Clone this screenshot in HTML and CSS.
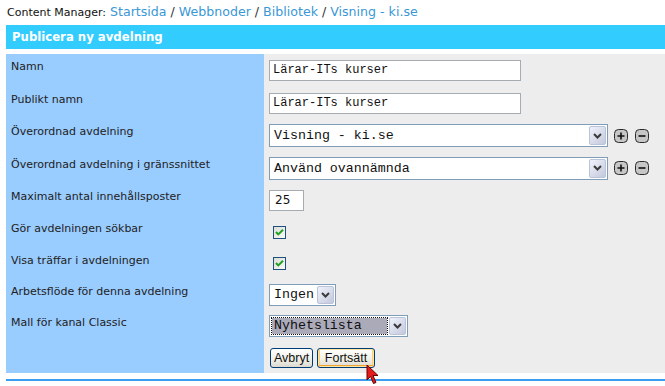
FILE: index.html
```html
<!DOCTYPE html>
<html lang="sv">
<head>
<meta charset="utf-8">
<title>Publicera ny avdelning</title>
<link rel="stylesheet" href="styles.css">
</head>
<body>
<div class="crumbs"><span class="cm">Content Manager:</span> <a class="lnk">Startsida</a> / <a class="lnk">Webbnoder</a> / <a class="lnk">Bibliotek</a> / <a class="lnk">Visning - ki.se</a></div>
<div class="title">Publicera ny avdelning</div>
<div class="form">
  <div class="lbl">Namn</div>
  <div class="val"><div class="text w-long">Lärar-ITs kurser</div></div>

  <div class="lbl">Publikt namn</div>
  <div class="val"><div class="text w-long">Lärar-ITs kurser</div></div>

  <div class="lbl">Överordnad avdelning</div>
  <div class="val">
    <div class="select w-wide"><span class="opt">Visning - ki.se</span><span class="arrow"><svg width="9" height="6" viewBox="0 0 9 6"><path d="M1 1 L4.5 4.5 L8 1" fill="none" stroke="#3a3a3a" stroke-width="2"/></svg></span></div>
    <div class="pm">
      <svg width="14" height="14" viewBox="0 0 14 14"><rect x="0.5" y="0.5" width="13" height="13" rx="4" fill="#c6c6c6" stroke="#2a2a2a"/><path d="M3.5 7 H10.5 M7 3.5 V10.5" stroke="#111" stroke-width="1.6"/></svg>
      <svg width="14" height="14" viewBox="0 0 14 14"><rect x="0.5" y="0.5" width="13" height="13" rx="4" fill="#c6c6c6" stroke="#2a2a2a"/><path d="M3.5 7 H10.5" stroke="#111" stroke-width="1.6"/></svg>
    </div>
  </div>

  <div class="lbl">Överordnad avdelning i gränssnittet</div>
  <div class="val">
    <div class="select w-wide"><span class="opt">Använd ovannämnda</span><span class="arrow"><svg width="9" height="6" viewBox="0 0 9 6"><path d="M1 1 L4.5 4.5 L8 1" fill="none" stroke="#3a3a3a" stroke-width="2"/></svg></span></div>
    <div class="pm">
      <svg width="14" height="14" viewBox="0 0 14 14"><rect x="0.5" y="0.5" width="13" height="13" rx="4" fill="#c6c6c6" stroke="#2a2a2a"/><path d="M3.5 7 H10.5 M7 3.5 V10.5" stroke="#111" stroke-width="1.6"/></svg>
      <svg width="14" height="14" viewBox="0 0 14 14"><rect x="0.5" y="0.5" width="13" height="13" rx="4" fill="#c6c6c6" stroke="#2a2a2a"/><path d="M3.5 7 H10.5" stroke="#111" stroke-width="1.6"/></svg>
    </div>
  </div>

  <div class="lbl">Maximalt antal innehållsposter</div>
  <div class="val"><div class="text num">25</div></div>

  <div class="lbl">Gör avdelningen sökbar</div>
  <div class="val"><svg class="cb" width="13" height="13" viewBox="0 0 13 13"><defs><linearGradient id="cbg" x1="0" y1="0" x2="1" y2="1"><stop offset="0" stop-color="#dcdcd6"/><stop offset="1" stop-color="#fbfbf9"/></linearGradient></defs><rect x="0.5" y="0.5" width="12" height="12" fill="url(#cbg)" stroke="#1c5180"/><path d="M3 6 L5.3 8.4 L10 3.8" fill="none" stroke="#21a121" stroke-width="2"/></svg></div>

  <div class="lbl">Visa träffar i avdelningen</div>
  <div class="val"><svg class="cb" width="13" height="13" viewBox="0 0 13 13"><rect x="0.5" y="0.5" width="12" height="12" fill="url(#cbg)" stroke="#1c5180"/><path d="M3 6 L5.3 8.4 L10 3.8" fill="none" stroke="#21a121" stroke-width="2"/></svg></div>

  <div class="lbl">Arbetsflöde för denna avdelning</div>
  <div class="val"><div class="select w-ingen"><span class="opt">Ingen</span><span class="arrow"><svg width="9" height="6" viewBox="0 0 9 6"><path d="M1 1 L4.5 4.5 L8 1" fill="none" stroke="#3a3a3a" stroke-width="2"/></svg></span></div></div>

  <div class="lbl">Mall för kanal Classic</div>
  <div class="val"><div class="select w-mall"><span class="opt focus">Nyhetslista</span><span class="arrow"><svg width="9" height="6" viewBox="0 0 9 6"><path d="M1 1 L4.5 4.5 L8 1" fill="none" stroke="#3a3a3a" stroke-width="2"/></svg></span></div></div>

  <div class="lbl"></div>
  <div class="val btns"><span class="btn">Avbryt</span><span class="btn hot">Fortsätt</span></div>
</div>
<div class="rule"></div>
<svg class="cursor" width="14" height="22" viewBox="0 0 14 22"><path d="M1 1 L1 16 L4.5 12.5 L7.5 19.5 L10 18.5 L7 11.5 L12 11.5 Z" fill="#e41b1b" stroke="#6a0000" stroke-width="1" stroke-linejoin="round"/></svg>
</body>
</html>
```

FILE: styles.css
```css
html, body {
  margin: 0;
  padding: 0;
  background: #ffffff;
}
body {
  padding-left: 6px;
  font-family: "DejaVu Sans", Verdana, sans-serif;
  color: #222;
  position: relative;
  overflow: hidden;
  height: 386px;
}
.crumbs {
  height: 25px;
  box-sizing: border-box;
  padding: 4px 0 0 1px;
  font-family: "DejaVu Sans", sans-serif;
  font-size: 12.6px;
  line-height: 16px;
  color: #333;
  white-space: nowrap;
}
.cm {
  font-family: "DejaVu Sans", sans-serif;
  font-size: 11px;
  color: #111;
}
.lnk {
  color: #3a98d6;
  text-decoration: none;
}
.title {
  height: 24px;
  line-height: 24px;
  background: #33ccff;
  color: #fff;
  font-weight: bold;
  font-size: 11.7px;
  padding-left: 6px;
  white-space: nowrap;
}
.form {
  margin-top: 5px;
  display: grid;
  grid-template-columns: 258px 1fr;
  grid-template-rows: 33px 32px 33px 32px 32px 32px 31px 31px 32px 31px;
  background: #ededed;
}
.lbl {
  background: #99ccff;
  font-size: 11px;
  line-height: 13px;
  padding: 6px 0 0 5px;
  color: #222;
  white-space: nowrap;
}
.val {
  display: flex;
  align-items: center;
  padding-left: 5px;
}
.text {
  box-sizing: border-box;
  height: 21px;
  border: 1px solid #a5acb2;
  background: #fff;
  font-family: "Liberation Mono", "Courier New", monospace;
  font-size: 12px;
  line-height: 19px;
  padding-left: 3px;
  color: #111;
}
.w-long { width: 252px; }
.num {
  width: 35px;
  font-family: "DejaVu Sans", sans-serif;
  font-size: 12px;
  padding-left: 5px;
}
.select {
  box-sizing: border-box;
  height: 22px;
  border: 1px solid #7f9db9;
  background: #fff;
  display: flex;
  align-items: stretch;
  font-family: "Liberation Mono", "Courier New", monospace;
  font-size: 13.3px;
  color: #111;
}
.w-wide { width: 339px; height: 23px; }
.w-ingen { width: 67px; }
.w-mall { width: 139px; }
.opt {
  flex: 1;
  line-height: 20px;
  padding-left: 4px;
  white-space: nowrap;
}
.w-wide .opt { line-height: 21px; }
.opt.focus {
  margin: 2px 1px 2px 2px;
  background: #aaaab9;
  outline: 1px dotted #111;
  line-height: 16px;
  padding-left: 2px;
}
.arrow {
  width: 15px;
  margin: 1px;
  border: 1px solid #b9c3da;
  border-radius: 2px;
  background: linear-gradient(135deg, #f0f2fb, #c4c8dc);
  display: flex;
  align-items: center;
  justify-content: center;
}
.pm {
  display: flex;
  gap: 7px;
  margin-left: 6px;
}
.cb {
  margin-left: 4px;
  display: block;
}
.btns {
  gap: 4px;
  padding-left: 6px;
}
.btn {
  box-sizing: border-box;
  height: 20px;
  line-height: 18px;
  border: 1px solid #003c74;
  border-radius: 3px;
  background: linear-gradient(#ffffff, #f0efe6 60%, #dcdad0);
  font-family: "Liberation Sans", Arial, sans-serif;
  font-size: 12.5px;
  color: #111;
  padding: 0 3px;
  width: 43px;
  text-align: center;
}
.btn.hot {
  width: 58px;
  box-shadow: inset 0 0 0 1px #fde6a2, inset 0 -2px 0 #f1a330, inset 2px 0 0 #fbd27a, inset -2px 0 0 #fbd27a;
}
.rule {
  margin-top: 6px;
  height: 2px;
  background: #3c9cf0;
}
.cursor {
  position: absolute;
  left: 366px;
  top: 364px;
}
```
